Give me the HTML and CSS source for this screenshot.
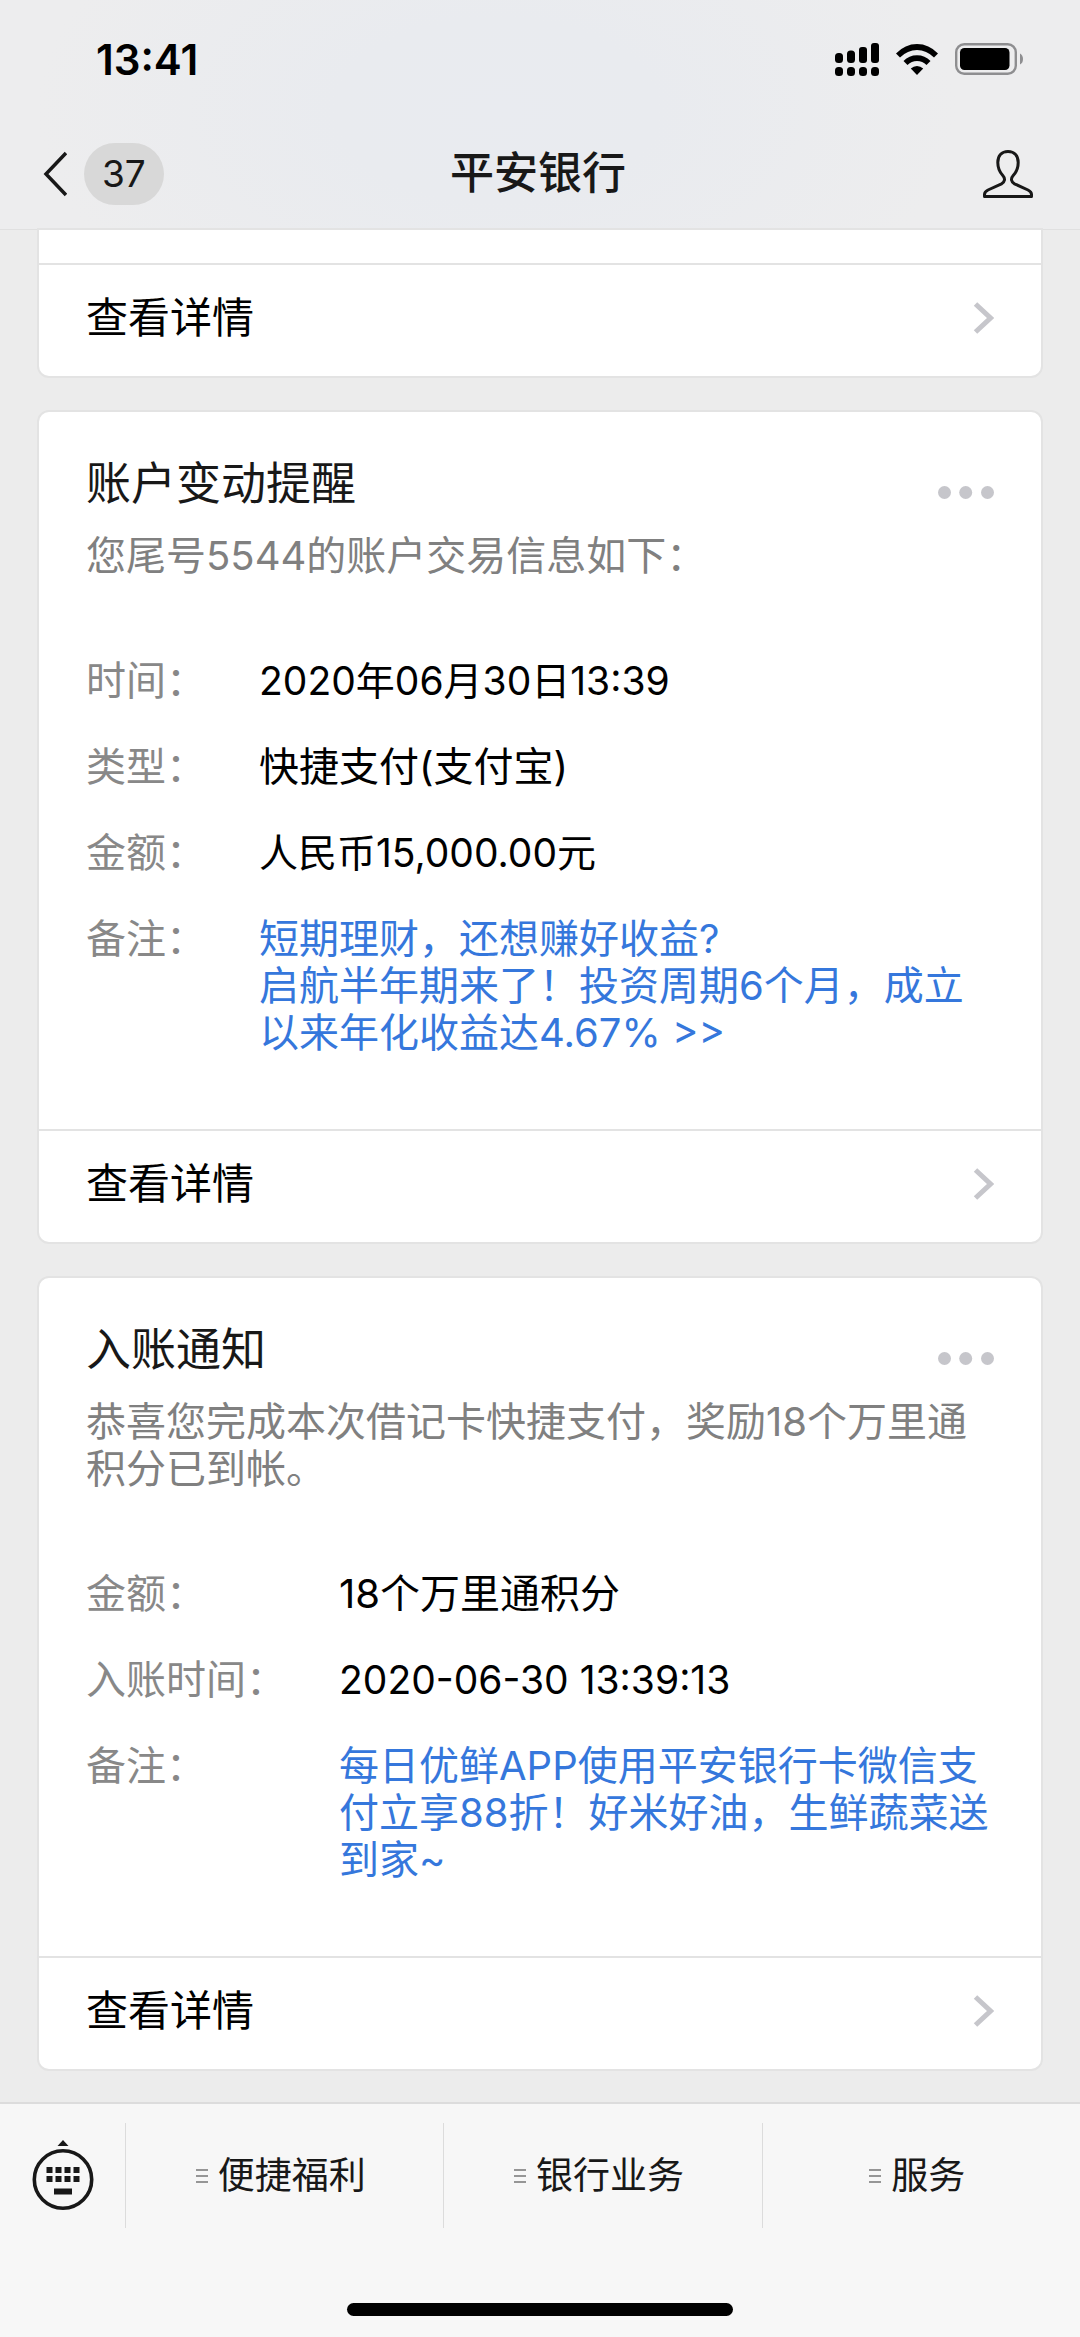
FILE: index.html
```html
<!DOCTYPE html>
<html lang="zh-CN">
<head>
<meta charset="utf-8">
<meta name="viewport" content="width=device-width, initial-scale=1">
<title>平安银行</title>
<link rel="stylesheet" href="styles.css">
</head>
<body>
<header class="top">
  <div class="status">
    <time class="clock">13:41</time>
    <div class="status-icons">
      <svg width="44" height="33" viewBox="0 0 44 33" aria-hidden="true">
        <rect x="0" y="10" width="8" height="10" rx="3.5"/><rect x="12" y="7.500" width="8" height="12.500" rx="3.500"/><rect x="24" y="4" width="8" height="16" rx="3"/><rect x="36" y="0" width="8" height="20" rx="3"/>
        <rect x="0" y="24" width="8" height="9" rx="3.500"/><rect x="12" y="24" width="8" height="9" rx="3.500"/><rect x="24" y="24" width="8" height="9" rx="3.500"/><rect x="36" y="24" width="8" height="9" rx="3.500"/>
      </svg>
      <svg width="42" height="31" viewBox="0 0 42 31" aria-hidden="true">
        <path d="M0 9.500Q9 0 21 0T42 9.500L38 13.500Q30.500 6 21 6T4 13.500Z"/>
        <path d="M7.500 17Q13 11.200 21 11.200T34.500 17L30.500 21Q26.500 17 21 17T11.500 21Z"/>
        <path d="M14.800 24.500Q17.500 22 21 22T27.200 24.500L21 31Z"/>
      </svg>
      <svg width="69" height="32" viewBox="0 0 69 32" aria-hidden="true">
        <rect x="1.200" y="1.200" width="59.600" height="29.600" rx="8" fill="none" stroke="#8e8e90" stroke-width="2.400"/>
        <rect x="5" y="5" width="49.500" height="22" rx="4.500"/>
        <path d="M65 10.500Q68 12 68 16T65 21.500Z" fill="#8e8e90"/>
      </svg>
    </div>
  </div>
  <nav class="nav">
    <a class="back" href="#" aria-label="返回">
      <svg width="24" height="46" viewBox="0 0 24 46" aria-hidden="true"><path d="M23 2 3 23l20 21" fill="none" stroke="#181818" stroke-width="3.500"/></svg>
      <span class="badge">37</span>
    </a>
    <h1 class="name">平安银行</h1>
    <button class="profile" type="button" aria-label="公众号资料">
      <svg width="50" height="48" viewBox="0 0 50 48" aria-hidden="true"><path d="M25 1.500C18.500 1.500 14.800 6 14.800 12.500C14.800 19 17 22.500 19.800 25.500C22.500 28.500 22 32 18.500 33.800L5 40Q1.500 41.800 1.500 44.500V46.500H48.500V44.500Q48.500 41.800 45 40L31.500 33.800C28 32 27.500 28.500 30.200 25.500C33 22.500 35.200 19 35.200 12.500C35.200 6 31.500 1.500 25 1.500Z" fill="none" stroke="#181818" stroke-width="3" stroke-linejoin="round"/></svg>
    </button>
  </nav>
</header>

<main class="feed">
  <article class="card card-cut">
    <a class="more" href="#">查看详情
      <svg width="21" height="32" viewBox="0 0 21 32" aria-hidden="true"><path d="M2.500 2 17.500 16 2.500 30" fill="none" stroke="#c6c6cb" stroke-width="5"/></svg>
    </a>
  </article>

  <article class="card">
    <div class="card-body">
      <div class="card-head">
        <h2 class="card-title">账户变动提醒</h2>
        <button class="dots" type="button" aria-label="更多">
          <svg width="56" height="13" viewBox="0 0 56 13" aria-hidden="true"><circle cx="6.500" cy="6.500" r="6.500"/><circle cx="27.700" cy="6.500" r="6.500"/><circle cx="49.500" cy="6.500" r="6.500"/></svg>
        </button>
      </div>
      <p class="summary">您尾号5544的账户交易信息如下：</p>
      <dl class="fields">
        <dt>时间：</dt><dd class="figures">2020年06月30日13:39</dd>
        <dt>类型：</dt><dd>快捷支付(支付宝)</dd>
        <dt>金额：</dt><dd class="figures">人民币15,000.00元</dd>
        <dt>备注：</dt><dd><a class="promo" href="#">短期理财，还想赚好收益?<br>启航半年期来了！投资周期6个月，成立以来年化收益达4.67% &gt;&gt;</a></dd>
      </dl>
    </div>
    <a class="more" href="#">查看详情
      <svg width="21" height="32" viewBox="0 0 21 32" aria-hidden="true"><path d="M2.500 2 17.500 16 2.500 30" fill="none" stroke="#c6c6cb" stroke-width="5"/></svg>
    </a>
  </article>

  <article class="card">
    <div class="card-body">
      <div class="card-head">
        <h2 class="card-title">入账通知</h2>
        <button class="dots" type="button" aria-label="更多">
          <svg width="56" height="13" viewBox="0 0 56 13" aria-hidden="true"><circle cx="6.500" cy="6.500" r="6.500"/><circle cx="27.700" cy="6.500" r="6.500"/><circle cx="49.500" cy="6.500" r="6.500"/></svg>
        </button>
      </div>
      <p class="summary">恭喜您完成本次借记卡快捷支付，奖励18个万里通积分已到帐。</p>
      <dl class="fields">
        <dt>金额：</dt><dd>18个万里通积分</dd>
        <dt>入账时间：</dt><dd class="figures">2020-06-30 13:39:13</dd>
        <dt>备注：</dt><dd><a class="promo" href="#">每日优鲜APP使用平安银行卡微信支付立享88折！好米好油，生鲜蔬菜送到家~</a></dd>
      </dl>
    </div>
    <a class="more" href="#">查看详情
      <svg width="21" height="32" viewBox="0 0 21 32" aria-hidden="true"><path d="M2.500 2 17.500 16 2.500 30" fill="none" stroke="#c6c6cb" stroke-width="5"/></svg>
    </a>
  </article>
</main>

<footer class="bottom">
  <div class="menu">
    <button class="menu-key" type="button" aria-label="切换到键盘">
      <svg width="62" height="71" viewBox="0 0 62 71" aria-hidden="true" fill="#181818">
        <path d="M31 0 36.500 6H25.500Z"/>
        <circle cx="31" cy="39.500" r="28.700" fill="none" stroke="#181818" stroke-width="3.600"/>
        <path d="M14.500 27h6v6h-6zM23.500 27h6v6h-6zM32.500 27h6v6h-6zM41.500 27h6v6h-6zM14.500 36h6v6h-6zM23.500 36h6v6h-6zM32.500 36h6v6h-6zM41.500 36h6v6h-6zM22 48.500h18v6H22z"/>
      </svg>
    </button>
    <button class="menu-item" type="button"><svg width="12" height="16" viewBox="0 0 12 16" aria-hidden="true"><path d="M0 2h12M0 8h12M0 14h12" stroke="#777" stroke-width="1.500"/></svg>便捷福利</button>
    <button class="menu-item" type="button"><svg width="12" height="16" viewBox="0 0 12 16" aria-hidden="true"><path d="M0 2h12M0 8h12M0 14h12" stroke="#777" stroke-width="1.500"/></svg>银行业务</button>
    <button class="menu-item" type="button"><svg width="12" height="16" viewBox="0 0 12 16" aria-hidden="true"><path d="M0 2h12M0 8h12M0 14h12" stroke="#777" stroke-width="1.500"/></svg>服务</button>
  </div>
  <div class="home-bar"></div>
</footer>
</body>
</html>
```
FILE: styles.css
```css
* {
  box-sizing: border-box;
}

body {
  margin: 0;
  min-height: 100vh;
  display: flex;
  flex-direction: column;
  background: #ececec;
  color: #000;
  font-family: Inter, "Noto Sans CJK SC", sans-serif;
  font-size: 40px;
  line-height: 47px;
}

h1, h2, p, dl, dd {
  margin: 0;
  font-weight: 400;
}

a {
  color: inherit;
  text-decoration: none;
}

button {
  border: 0;
  padding: 0;
  background: none;
  color: inherit;
  font: inherit;
}

svg {
  display: block;
  flex: none;
}

/* Status bar and navigation */
.top {
  border-bottom: 1px solid #e0e0e0;
  background: radial-gradient(ellipse 460px 260px at 46% 48%, #e9ebf0, #e9ebef 35%, #ededee);
}

.status {
  height: 118px;
  padding: 0 56px 0 96px;
  display: flex;
  align-items: center;
  justify-content: space-between;
}

.clock {
  font-size: 42px;
  font-weight: 600;
}

.status-icons {
  display: flex;
  align-items: center;
  gap: 17px;
}

.nav {
  height: 111px;
  padding: 0 47px 0 43px;
  display: grid;
  grid-template-columns: 1fr auto 1fr;
  align-items: center;
}

.back {
  display: flex;
  align-items: center;
  gap: 17px;
}

.badge {
  padding: 0 18px;
  border-radius: 31px;
  background: #d8d8d8;
  color: #181818;
  font-size: 37px;
  line-height: 62px;
}

.name {
  color: #181818;
  font-size: 44px;
  font-weight: 500;
}

.profile {
  justify-self: end;
}

/* Message cards */
.feed {
  flex: 1;
  padding: 0 39px 33px;
  display: flex;
  flex-direction: column;
  gap: 36px;
}

.card {
  border-radius: 10px;
  background: #fff;
  box-shadow: 0 0 0 2px #e3e3e3;
}

.card-cut {
  padding-top: 33px;
  border-radius: 0 0 10px 10px;
}

.card-body {
  padding: 42px 47px 73px;
}

.card-head {
  height: 60px;
  display: flex;
  align-items: flex-end;
  justify-content: space-between;
}

.card-title {
  color: #181818;
  font-size: 45px;
  line-height: 60px;
}

.dots {
  padding: 15px 0;
  fill: #c6c6cb;
}

.summary {
  margin: 18px 0 78px;
  color: #808080;
}

.fields {
  display: grid;
  grid-template-columns: max-content 1fr;
  gap: 39px 53px;
}

.fields dt {
  color: #888;
}

.figures {
  font-size: 39px;
}

.promo {
  color: #3577dc;
}

.more {
  height: 113px;
  padding: 0 47px 6px;
  border-top: 2px solid #e3e3e3;
  display: flex;
  align-items: center;
  justify-content: space-between;
  font-size: 42px;
}

/* Service menu */
.bottom {
  padding: 19px 0 21px;
  border-top: 2px solid #dcdcdc;
  background: #f7f7f7;
}

.menu {
  display: flex;
  height: 105px;
}

.menu-key {
  width: 125px;
  display: flex;
  align-items: center;
  justify-content: center;
}

.menu-item {
  flex: 1;
  padding-right: 8px;
  border-left: 1px solid #dcdcdc;
  display: flex;
  align-items: center;
  justify-content: center;
  gap: 10px;
  color: #181818;
  font-size: 37px;
}

.home-bar {
  width: 386px;
  height: 13px;
  margin: 75px auto 0;
  border-radius: 7px;
  background: #000;
}
```
